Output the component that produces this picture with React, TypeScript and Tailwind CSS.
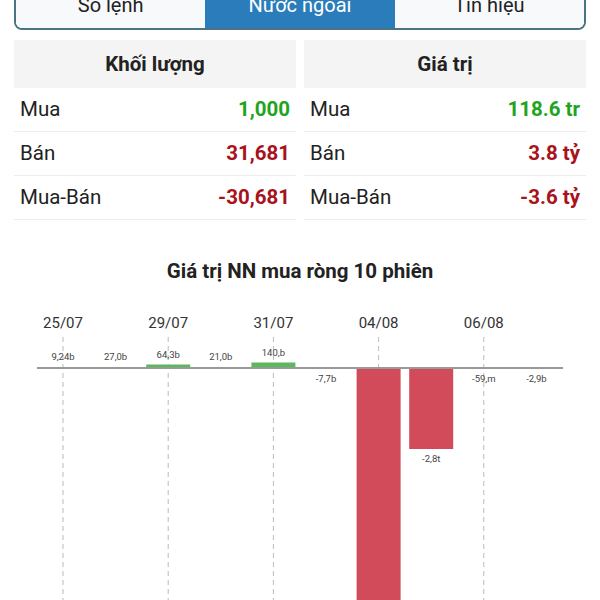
import React from "react";

const tabs = ["Sổ lệnh", "Nước ngoài", "Tín hiệu"];

type Row = { label: string; value: string; color: string };

const volume: Row[] = [
  { label: "Mua", value: "1,000", color: "text-[#1ea41e]" },
  { label: "Bán", value: "31,681", color: "text-[#a8131b]" },
  { label: "Mua-Bán", value: "-30,681", color: "text-[#a8131b]" },
];

const value: Row[] = [
  { label: "Mua", value: "118.6 tr", color: "text-[#1ea41e]" },
  { label: "Bán", value: "3.8 tỷ", color: "text-[#a8131b]" },
  { label: "Mua-Bán", value: "-3.6 tỷ", color: "text-[#a8131b]" },
];

// chart data: label, bar height in px (negative = below baseline), up = label above line
const bars = [
  { label: "9,24b", h: 0, up: true },
  { label: "27,0b", h: 0, up: true },
  { label: "64,3b", h: 2.5, up: true },
  { label: "21,0b", h: 0, up: true },
  { label: "140,b", h: 4.5, up: true },
  { label: "-7,7b", h: 0, up: false },
  { label: "", h: -400, up: false },
  { label: "-2,8t", h: -80, up: false },
  { label: "-59,m", h: 0, up: false },
  { label: "-2,9b", h: 0, up: false },
];

const dates = [
  { i: 0, t: "25/07" },
  { i: 2, t: "29/07" },
  { i: 4, t: "31/07" },
  { i: 6, t: "04/08" },
  { i: 8, t: "06/08" },
];

function Table({ title, rows }: { title: string; rows: Row[] }) {
  return (
    <div>
      <div className="h-[48px] bg-[#f4f4f4] flex items-center justify-center text-[20.5px] font-bold text-[#222]">
        {title}
      </div>
      {rows.map((r) => (
        <div
          key={r.label}
          className="h-[44px] flex items-center justify-between px-[6px] border-b border-[#ececec] text-[20.5px]"
        >
          <span className="text-[#222]">{r.label}</span>
          <span className={`font-bold ${r.color}`}>{r.value}</span>
        </div>
      ))}
    </div>
  );
}

function Chart() {
  const base = 78;
  const slot = 52.6;
  const x0 = 63;
  return (
    <svg width="600" height="320" className="block">
      {dates.map((d) => {
        const x = x0 + slot * d.i;
        return (
          <g key={d.t}>
            <text x={x} y={38} textAnchor="middle" fontSize="15" fill="#333">
              {d.t}
            </text>
            <line x1={x} y1={47} x2={x} y2={320} stroke="#bbb" strokeWidth="1" strokeDasharray="5 4" />
          </g>
        );
      })}
      {bars.map((b, i) => {
        const c = x0 + slot * i;
        if (b.up) {
          return (
            <g key={i}>
              {b.h > 0 && <rect x={c - 22} y={base - 1 - b.h} width={44} height={b.h} fill="#5cb85c" />}
              <text x={c} y={base - 8 - b.h} textAnchor="middle" fontSize="9.5" fill="#444">
                {b.label}
              </text>
            </g>
          );
        }
        return (
          <g key={i}>
            {b.h < 0 && <rect x={c - 22} y={base + 1} width={44} height={-b.h} fill="#d24b5a" />}
            {b.label && (
              <text x={c} y={base - b.h + 14} textAnchor="middle" fontSize="9.5" fill="#444">
                {b.label}
              </text>
            )}
          </g>
        );
      })}
      <line x1={37} y1={base} x2={563} y2={base} stroke="#999" strokeWidth="2" />
    </svg>
  );
}

export default function App() {
  return (
    <div className="w-[600px] h-[600px] overflow-hidden bg-white font-['Roboto',sans-serif]">
      <div className="mx-[14px] -mt-[14px] h-[44px] flex border-2 border-[#4a7482] rounded-[8px] overflow-hidden">
        {tabs.map((t, i) => (
          <div
            key={t}
            className={
              i === 1
                ? "flex-1 flex items-center justify-center bg-[#2a7dba] text-white text-[20px] pb-[7px]"
                : "flex-1 flex items-center justify-center bg-[#f7f9fa] text-[#222] text-[20px] pb-[7px]"
            }
          >
            {t}
          </div>
        ))}
      </div>

      <div className="grid grid-cols-2 gap-[8px] px-[14px] mt-[10px]">
        <Table title="Khối lượng" rows={volume} />
        <Table title="Giá trị" rows={value} />
      </div>

      <div className="mt-[38px] text-center text-[20.5px] leading-[26px] font-bold text-[#222]">
        Giá trị NN mua ròng 10 phiên
      </div>
      <div className="mt-[6px]">
        <Chart />
      </div>
    </div>
  );
}
